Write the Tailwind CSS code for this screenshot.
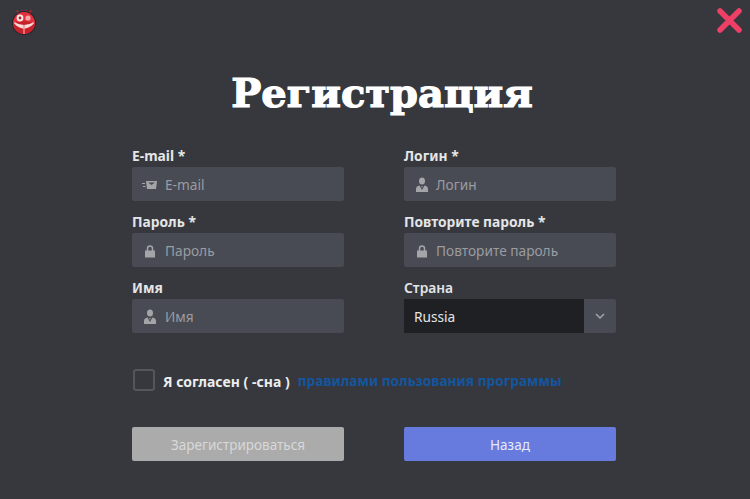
<!DOCTYPE html>
<html lang="ru">
<head>
  <meta charset="UTF-8" />
  <title>Регистрация</title>
  <script src="https://cdn.jsdelivr.net/npm/@tailwindcss/browser@4"></script>
</head>
<body class="bg-[#36383d] h-[499px] w-[750px] overflow-hidden font-['Noto_Sans',sans-serif]">
  <div class="relative h-full flex flex-col">

    <!-- logo -->
    <svg class="absolute left-[10px] top-[7px]" width="28" height="29" viewBox="0 0 28 29">
      <path d="M9 8 L7 3 M12 7 L12 3 M16 7 L16 3 M19 8 L21 3" stroke="#a5262c" stroke-width="1.6"/>
      <circle cx="14" cy="16" r="12" fill="#1f2530"/>
      <circle cx="14" cy="16" r="11" fill="#e3303a"/>
      <path d="M3 17 Q14 11 25 17 Q24 26 14 27 Q4 26 3 17Z" fill="#c72129"/>
      <path d="M4 15 Q14 21 24 15 Q24 19 14 22 Q4 19 4 15Z" fill="#f7dcdc"/>
      <path d="M14 18 V27" stroke="#f08a8f" stroke-width="1.5"/>
      <circle cx="10" cy="11" r="3.4" fill="#f6e8e8"/>
      <circle cx="10" cy="11" r="1.4" fill="#a5262c"/>
      <circle cx="18" cy="11" r="2.6" fill="#f2a5a9"/>
    </svg>

    <!-- close -->
    <svg class="absolute left-[716px] top-[7px]" width="27" height="27" viewBox="0 0 27 27">
      <path d="M4 4 L23 23 M23 4 L4 23" stroke="#ee3f66" stroke-width="5.5" stroke-linecap="round"/>
    </svg>

    <h1 class="mt-[64px] h-[57px] pl-[14px] text-center text-white text-[40px] leading-[57px] font-bold font-['DejaVu_Serif',serif] [-webkit-text-stroke:1.2px_white]">Регистрация</h1>

    <form class="mt-[24px] ml-[132px] w-[484px] grid grid-cols-[212px_212px] gap-x-[60px] gap-y-[10px]">
      <div>
        <label class="block h-[22px] text-[13.8px] leading-[22px] font-bold text-[#e4e5e7]">E-mail *</label>
        <div class="h-[34px] bg-[#484b53] rounded-[2px] flex items-center text-[13.7px] text-[#9a9ca1] pt-[2px]">
          <svg class="ml-[10px] w-[16px]" width="16" height="10" viewBox="0 0 16 10" fill="#a3a5a8">
            <path d="M4 1 H15 L14 9 H5 Z M6 2.5 L9.5 5 L13 2.5 Z" fill-rule="evenodd"/>
            <path d="M0 3 H3 V4 H0 Z M1 6 H3.5 V7 H1 Z"/>
          </svg>
          <span class="ml-[7px]">E-mail</span>
        </div>
      </div>
      <div>
        <label class="block h-[22px] text-[13.8px] leading-[22px] font-bold text-[#e4e5e7]">Логин *</label>
        <div class="h-[34px] bg-[#484b53] rounded-[2px] flex items-center text-[13.7px] text-[#9a9ca1] pt-[2px]">
          <svg class="ml-[10px] w-[16px]" width="16" height="16" viewBox="0 0 16 16" fill="#a3a5a8">
            <ellipse cx="8" cy="4" rx="3" ry="3.5"/>
            <path d="M2 15 V12 Q2 9 5.5 8.5 L8 13 L10.5 8.5 Q14 9 14 12 V15 Z"/>
            <path d="M7.2 9 H8.8 L8 11 Z"/>
          </svg>
          <span class="ml-[6px]">Логин</span>
        </div>
      </div>
      <div>
        <label class="block h-[22px] text-[13.8px] leading-[22px] font-bold text-[#e4e5e7]">Пароль *</label>
        <div class="h-[34px] bg-[#484b53] rounded-[2px] flex items-center text-[13.7px] text-[#9a9ca1] pt-[2px]">
          <svg class="ml-[10px] w-[16px]" width="16" height="13" viewBox="0 0 16 13" fill="#a3a5a8">
            <path d="M3 5.5 H13 V12.5 H3 Z"/>
            <path d="M5.5 6 V3.5 Q5.5 1 8 1 Q10.5 1 10.5 3.5 V6" fill="none" stroke="#a3a5a8" stroke-width="1.5"/>
          </svg>
          <span class="ml-[7px]">Пароль</span>
        </div>
      </div>
      <div>
        <label class="block h-[22px] text-[13.8px] leading-[22px] font-bold text-[#e4e5e7]">Повторите пароль *</label>
        <div class="h-[34px] bg-[#484b53] rounded-[2px] flex items-center text-[13.7px] text-[#9a9ca1] pt-[2px]">
          <svg class="ml-[10px] w-[16px]" width="16" height="13" viewBox="0 0 16 13" fill="#a3a5a8">
            <path d="M3 5.5 H13 V12.5 H3 Z"/>
            <path d="M5.5 6 V3.5 Q5.5 1 8 1 Q10.5 1 10.5 3.5 V6" fill="none" stroke="#a3a5a8" stroke-width="1.5"/>
          </svg>
          <span class="ml-[6px]">Повторите пароль</span>
        </div>
      </div>
      <div>
        <label class="block h-[22px] text-[13.8px] leading-[22px] font-bold text-[#e4e5e7]">Имя</label>
        <div class="h-[34px] bg-[#484b53] rounded-[2px] flex items-center text-[13.7px] text-[#9a9ca1] pt-[2px]">
          <svg class="ml-[10px] w-[16px]" width="16" height="16" viewBox="0 0 16 16" fill="#a3a5a8">
            <ellipse cx="8" cy="4" rx="3" ry="3.5"/>
            <path d="M2 15 V12 Q2 9 5.5 8.5 L8 13 L10.5 8.5 Q14 9 14 12 V15 Z"/>
            <path d="M7.2 9 H8.8 L8 11 Z"/>
          </svg>
          <span class="ml-[7px]">Имя</span>
        </div>
      </div>
      <div>
        <label class="block h-[22px] text-[13.8px] leading-[22px] font-semibold text-[#e4e5e7]">Страна</label>
        <div class="h-[34px] bg-[#484b53] rounded-[2px] flex items-center text-[13.7px]">
          <div class="w-[180px] h-full bg-[#1e2024] text-[#e4e5e7] flex items-center pl-[10px] pt-[2px]">Russia</div>
          <svg class="ml-[10px]" width="12" height="8" viewBox="0 0 12 8">
            <path d="M2 2 L6 6 L10 2" fill="none" stroke="#a3a5a8" stroke-width="1.5"/>
          </svg>
        </div>
      </div>
    </form>

    <div class="mt-[36px] ml-[133px] flex items-center h-[22px] font-bold">
      <span class="w-[22px] h-[22px] border-2 border-[#53565c] rounded-[3px]"></span>
      <span class="ml-[8px] pt-[2px] text-[14px] text-[#eceded]">Я согласен ( -сна )</span>
      <span class="ml-[8px] pt-[2px] text-[13.7px] text-[#14569e]">правилами пользования программы</span>
    </div>

    <div class="mt-[36px] ml-[132px] w-[484px] grid grid-cols-[212px_212px] gap-x-[60px] text-[13.5px]">
      <button class="h-[34px] bg-[#ababab] rounded-[2px] text-[#d8d8d8] pt-[2px]">Зарегистрироваться</button>
      <button class="h-[34px] bg-[#677bde] rounded-[2px] text-[#e6e9f8] pt-[2px]">Назад</button>
    </div>
  </div>
</body>
</html>
